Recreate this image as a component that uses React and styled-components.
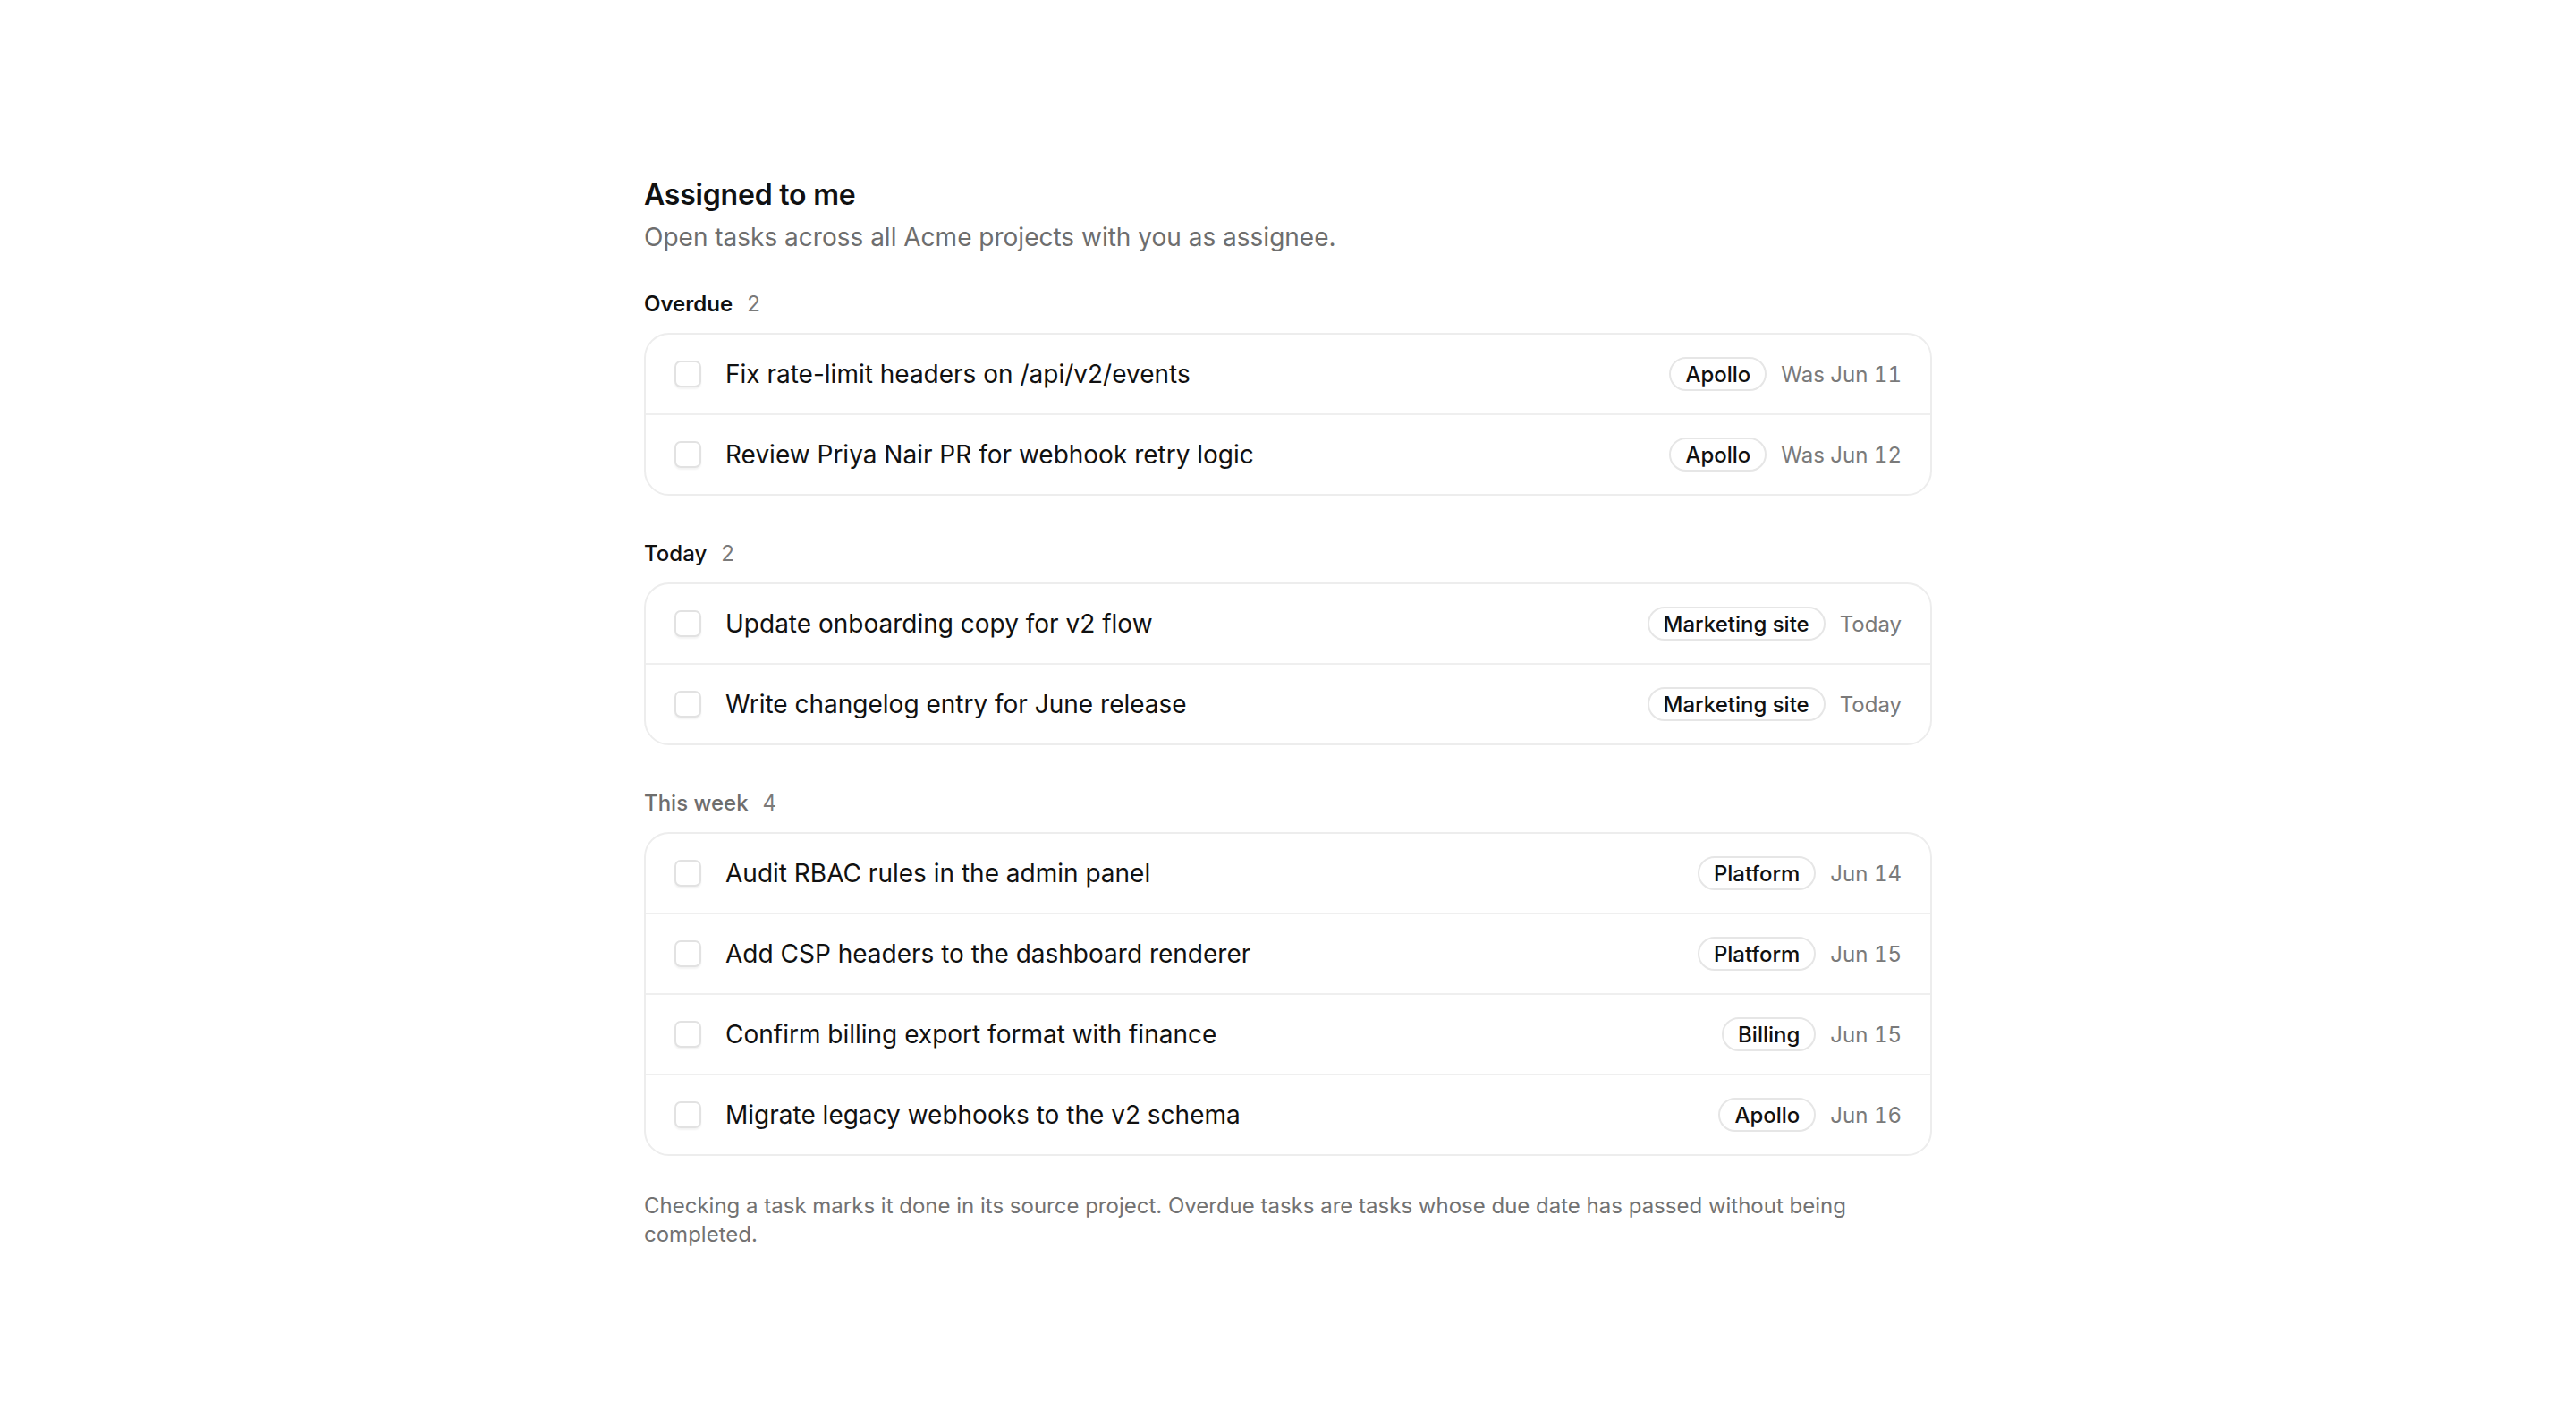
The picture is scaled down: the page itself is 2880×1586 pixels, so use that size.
import React from "react";
import styled, { createGlobalStyle } from "styled-components";

const Global = createGlobalStyle`
  html, body { margin: 0; padding: 0; background: #ffffff; }
  body { font-family: Inter, "Noto Sans", sans-serif; color: #111111; -webkit-font-smoothing: antialiased; }
  * { box-sizing: border-box; }
`;

const Page = styled.main`
  width: 1440px;
  margin: 0 auto;
  padding: 198px 0 120px;
  display: flex;
  flex-direction: column;
`;

const Title = styled.h1`
  margin: 0;
  font-size: 32px;
  line-height: 40px;
  font-weight: 600;
  color: #111111;
  letter-spacing: -0.2px;
`;

const Subtitle = styled.p`
  margin: 7px 0 0;
  font-size: 28px;
  line-height: 40px;
  color: #6e6e6e;
`;

const Section = styled.section`
  margin-top: ${(p) => (p.$first ? "39px" : "49px")};
  display: flex;
  flex-direction: column;
  gap: 16px;
`;

const SectionHead = styled.div`
  display: flex;
  align-items: baseline;
  gap: 16px;
  font-size: 24px;
  line-height: 32px;
  font-weight: ${(p) => p.$weight};
  color: ${(p) => p.$color};
`;

const Count = styled.span`
  font-weight: 400;
  color: #7a7a7a;
`;

const Card = styled.ul`
  list-style: none;
  margin: 0;
  padding: 0;
  border: 2px solid #ededed;
  border-radius: 28px;
  overflow: hidden;
`;

const Row = styled.li`
  height: 88px;
  display: flex;
  align-items: center;
  padding: 0 32px;
  gap: 27px;
  & + & { border-top: 2px solid #efefef; height: 90px; }
`;

const Check = styled.span`
  flex: none;
  width: 30px;
  height: 30px;
  border: 2px solid #e2e2e2;
  border-radius: 7px;
  background: #fff;
  box-shadow: 0 2px 2px rgba(0, 0, 0, 0.05);
`;

const TaskText = styled.span`
  flex: 1;
  font-size: 28px;
  line-height: 36px;
  color: #111111;
  white-space: nowrap;
`;

const Meta = styled.div`
  display: flex;
  align-items: center;
  gap: 16px;
`;

const Pill = styled.span`
  height: 38px;
  display: inline-flex;
  align-items: center;
  padding: 0 16px;
  border: 2px solid #e6e6e6;
  border-radius: 999px;
  font-size: 24px;
  font-weight: 500;
  color: #111111;
`;

const Due = styled.span`
  font-size: 24px;
  color: #7a7a7a;
  font-variant-numeric: tabular-nums;
`;

const Footnote = styled.p`
  margin: 40px 0 0;
  font-size: 24px;
  line-height: 32px;
  color: #727272;
`;

const sections = [
  {
    name: "Overdue",
    weight: 600,
    color: "#111111",
    tasks: [
      ["Fix rate-limit headers on /api/v2/events", "Apollo", "Was Jun 11"],
      ["Review Priya Nair PR for webhook retry logic", "Apollo", "Was Jun 12"],
    ],
  },
  {
    name: "Today",
    weight: 500,
    color: "#111111",
    tasks: [
      ["Update onboarding copy for v2 flow", "Marketing site", "Today"],
      ["Write changelog entry for June release", "Marketing site", "Today"],
    ],
  },
  {
    name: "This week",
    weight: 500,
    color: "#6e6e6e",
    tasks: [
      ["Audit RBAC rules in the admin panel", "Platform", "Jun 14"],
      ["Add CSP headers to the dashboard renderer", "Platform", "Jun 15"],
      ["Confirm billing export format with finance", "Billing", "Jun 15"],
      ["Migrate legacy webhooks to the v2 schema", "Apollo", "Jun 16"],
    ],
  },
];

export default function App() {
  return (
    <>
      <Global />
      <Page>
        <Title>Assigned to me</Title>
        <Subtitle>Open tasks across all Acme projects with you as assignee.</Subtitle>
        {sections.map((s, i) => (
          <Section key={s.name} $first={i === 0}>
            <SectionHead $weight={s.weight} $color={s.color}>
              <span>{s.name}</span>
              <Count>{s.tasks.length}</Count>
            </SectionHead>
            <Card>
              {s.tasks.map(([t, p, d]) => (
                <Row key={t}>
                  <Check role="checkbox" aria-checked="false" />
                  <TaskText>{t}</TaskText>
                  <Meta>
                    <Pill>{p}</Pill>
                    <Due>{d}</Due>
                  </Meta>
                </Row>
              ))}
            </Card>
          </Section>
        ))}
        <Footnote>
          Checking a task marks it done in its source project. Overdue tasks are tasks whose due date has passed without being completed.
        </Footnote>
      </Page>
    </>
  );
}
